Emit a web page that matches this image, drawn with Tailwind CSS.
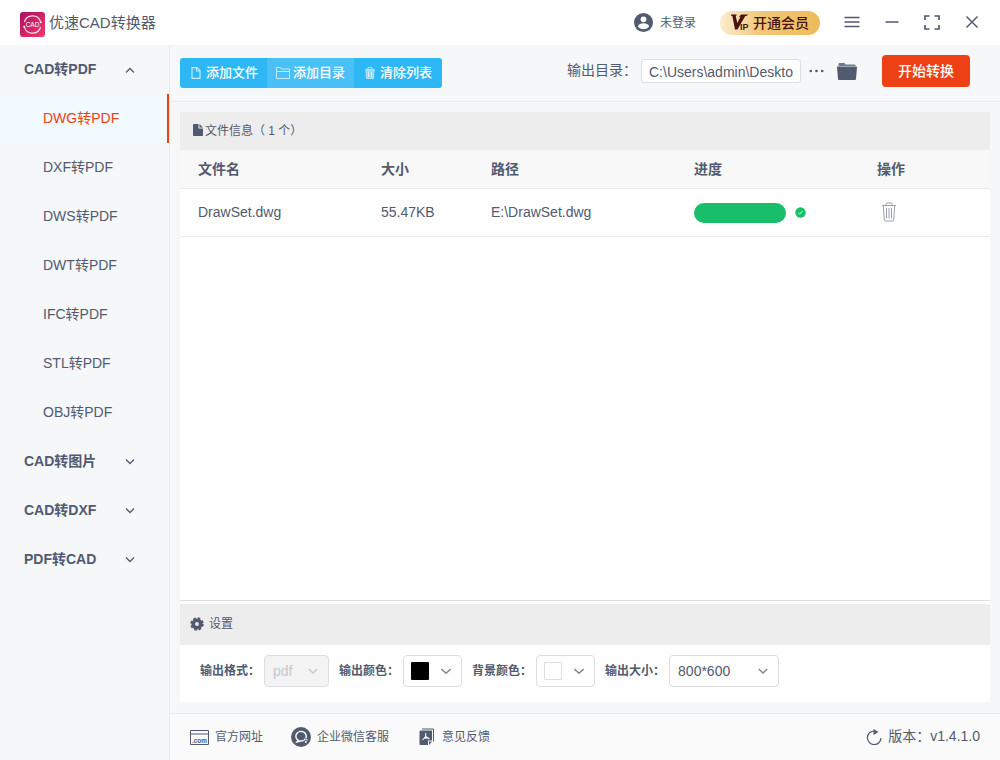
<!DOCTYPE html>
<html lang="zh-CN">
<head>
<meta charset="utf-8">
<meta name="viewport" content="width=device-width, initial-scale=1">
<title>优速CAD转换器</title>
<script src="https://cdn.jsdelivr.net/npm/@tailwindcss/browser@4"></script>
</head>
<body class="flex h-screen flex-col overflow-hidden bg-[#f5f7f9] font-['Liberation_Sans','Noto_Sans_CJK_SC',sans-serif] text-sm text-[#515a6e]">

<header class="flex h-[45px] shrink-0 items-center bg-white px-5">
  <svg class="mt-1 size-[25px]" viewBox="0 0 25 25" aria-hidden="true">
    <defs><linearGradient id="logo" x1="0" y1="0" x2="1" y2="1"><stop offset="0" stop-color="#a90f63"/><stop offset="1" stop-color="#f23a6c"/></linearGradient></defs>
    <rect width="25" height="25" rx="3" fill="url(#logo)"/>
    <path d="M4.400 10A8.400 8.400 0 0 1 20.500 9.600M20.600 15A8.400 8.400 0 0 1 4.500 15.400" fill="none" stroke="#fbdbe6" stroke-width="1.200"/>
    <circle cx="20.800" cy="10.300" r="1" fill="#fff"/><circle cx="4.200" cy="14.700" r="1" fill="#fff"/>
    <text x="12.500" y="15" text-anchor="middle" font-family="Liberation Sans" font-size="6.500" fill="#fff">CAD</text>
  </svg>
  <h1 class="ml-1 flex-1 text-[15px] leading-5">优速CAD转换器</h1>
  <button type="button" class="flex items-center gap-[7px] text-xs">
    <svg class="size-[19px]" viewBox="0 0 19 19" aria-hidden="true"><circle cx="9.500" cy="9.500" r="9.500" fill="#515a6e"/><circle cx="9.500" cy="6.300" r="2.900" fill="#fff"/><path d="M3.800 13.300c.6-2.300 3.200-3.100 5.700-3.100s5.100.8 5.700 3.100c-1.200 1.900-3.300 2.900-5.700 2.900s-4.500-1-5.700-2.900z" fill="#fff"/></svg>
    <span>未登录</span>
  </button>
  <button type="button" class="ml-6 flex h-6 w-[100px] items-center rounded-full bg-linear-to-r from-[#fbecd0] via-[#f1c878] via-40% to-[#eebb58] pl-[11px] text-[#4a1114]">
    <svg class="mr-[3px] h-[17px] w-[19px]" viewBox="0 0 19 17" fill="#4a1114" role="img" aria-label="VIP"><path d="M0 .5h5.500v1.200h-.8L6.300 9 9.500 2.800H7.600L10.300.5H17l-1.500 1.400h-1.200L6.400 15.500H4L1.300 1.800H0z"/><text x="9" y="16" font-family="Liberation Sans" font-weight="bold" font-size="9">IP</text></svg>
    <span class="text-sm leading-5 font-medium">开通会员</span>
  </button>
  <button type="button" aria-label="菜单" class="ml-6"><svg class="size-4" viewBox="0 0 16 16" fill="none" stroke="#515a6e" stroke-width="1.500"><path d="M.5 2.500h15M.5 7h15M.5 11.500h15"/></svg></button>
  <button type="button" aria-label="最小化" class="ml-6"><svg class="size-4" viewBox="0 0 16 16" fill="none" stroke="#515a6e" stroke-width="1.500"><path d="M1.500 7h13"/></svg></button>
  <button type="button" aria-label="最大化" class="ml-6"><svg class="size-4" viewBox="0 0 16 16" fill="none" stroke="#515a6e" stroke-width="1.700"><path d="M5.500 1H1v4M10.500 1H15v4M1 10v4h4.500M15 10v4h-4.500"/></svg></button>
  <button type="button" aria-label="关闭" class="ml-6"><svg class="size-4" viewBox="0 0 16 16" fill="none" stroke="#515a6e" stroke-width="1.500"><path d="M2.500 1.500l11 11M13.500 1.500l-11 11"/></svg></button>
</header>

<div class="flex min-h-0 flex-1">
  <nav class="w-[170px] shrink-0 border-r border-[#e8eaec] leading-5">
    <button type="button" aria-expanded="true" class="flex h-[49px] w-full items-center justify-between pb-[2px] pl-6 pr-[34px] font-bold">CAD转PDF
      <svg class="mt-[2px] size-[10px]" viewBox="0 0 10 10" fill="none" stroke="#515a6e" stroke-width="1.300"><path d="M1 7.500l4-4 4 4"/></svg></button>
    <a href="#dwg" aria-current="page" class="flex h-[49px] items-center border-r-2 border-[#ed4014] bg-[#f0faff] pb-[2px] pl-[43px] text-[#ed4014]">DWG转PDF</a>
    <a href="#dxf" class="flex h-[49px] items-center pb-[2px] pl-[43px]">DXF转PDF</a>
    <a href="#dws" class="flex h-[49px] items-center pb-[2px] pl-[43px]">DWS转PDF</a>
    <a href="#dwt" class="flex h-[49px] items-center pb-[2px] pl-[43px]">DWT转PDF</a>
    <a href="#ifc" class="flex h-[49px] items-center pb-[2px] pl-[43px]">IFC转PDF</a>
    <a href="#stl" class="flex h-[49px] items-center pb-[2px] pl-[43px]">STL转PDF</a>
    <a href="#obj" class="flex h-[49px] items-center pb-[2px] pl-[43px]">OBJ转PDF</a>
    <button type="button" aria-expanded="false" class="flex h-[49px] w-full items-center justify-between pb-[2px] pl-6 pr-[34px] font-bold">CAD转图片
      <svg class="size-[10px]" viewBox="0 0 10 10" fill="none" stroke="#515a6e" stroke-width="1.300"><path d="M1 3.500l4 4 4-4"/></svg></button>
    <button type="button" aria-expanded="false" class="flex h-[49px] w-full items-center justify-between pb-[2px] pl-6 pr-[34px] font-bold">CAD转DXF
      <svg class="size-[10px]" viewBox="0 0 10 10" fill="none" stroke="#515a6e" stroke-width="1.300"><path d="M1 3.500l4 4 4-4"/></svg></button>
    <button type="button" aria-expanded="false" class="flex h-[49px] w-full items-center justify-between pb-[2px] pl-6 pr-[34px] font-bold">PDF转CAD
      <svg class="size-[10px]" viewBox="0 0 10 10" fill="none" stroke="#515a6e" stroke-width="1.300"><path d="M1 3.500l4 4 4-4"/></svg></button>
  </nav>

  <div class="flex min-w-0 flex-1 flex-col">
    <div class="flex h-[57px] shrink-0 items-start border-b border-[#e8eaec] pt-[10px] pl-[10px] pr-[30px]">
      <div class="mt-[3px] flex h-[30px] overflow-hidden rounded-[3px] bg-[#2db7f5] text-[13px] leading-5 font-medium text-white">
        <button type="button" class="flex w-[87px] items-center gap-[5px] pl-[11px]">
          <svg class="h-3 w-[10px]" viewBox="0 0 10 12" fill="none" stroke="#c5eafc" stroke-width="1.200"><path d="M1 .6h5l3 3v7.800H1zM5.500.5v3.500H9"/></svg>添加文件</button>
        <button type="button" class="flex w-[87px] items-center gap-[3px] bg-[#4ac0f7] pl-[9px]">
          <svg class="h-3 w-[14px]" viewBox="0 0 14 12" fill="none" stroke="#c5eafc"><path d="M.5 11.500v-11h4l1 1.500h8v9.500H.5zM.5 4.500h13"/></svg>添加目录</button>
        <button type="button" class="flex w-[88px] items-center gap-[5px] pl-[11px]">
          <svg class="h-3 w-[10px]" viewBox="0 0 10 12" fill="none" stroke="#b4e4fb"><path d="M0 2.500h10M3 2.500V.5h4v2"/><path d="M1 3h8l-.6 8.500H1.600z" fill="#8fd7f9"/><path d="M3.500 4.500v5.500M6.500 4.500v5.500" stroke="#d8f2fd"/></svg>清除列表</button>
      </div>
      <div class="ml-auto flex h-8 items-center">
        <label for="outdir" class="pb-[2px] leading-5">输出目录：</label>
        <input id="outdir" type="text" value="C:\Users\admin\Deskto" class="ml-1 h-6 w-40 rounded-[3px] border border-[#dcdee2] bg-white px-[7px] pt-[2px] text-sm leading-5 outline-none">
        <button type="button" aria-label="浏览" class="ml-2"><svg class="h-4 w-[15px]" viewBox="0 0 15 16" fill="#515a6e"><circle cx="1.800" cy="8" r="1.300"/><circle cx="7.500" cy="8" r="1.300"/><circle cx="13.200" cy="8" r="1.300"/></svg></button>
        <button type="button" aria-label="打开目录" class="ml-[13px]"><svg class="h-[17px] w-5" viewBox="0 0 20 17" fill="#515a6e"><path d="M1.500 3V1q0-1 1-1h5l1 1.500h9q1 0 1 1V3z" opacity=".8"/><path d="M.8 3.500h18.400q.8 0 .8.800l-1 11.700q-.1 1-1 1H2q-.9 0-1-1L0 4.300q0-.8.800-.8z"/></svg></button>
        <button type="button" class="ml-[25px] h-8 w-[88px] rounded bg-[#ed4014] text-sm font-medium text-white">开始转换</button>
      </div>
    </div>

    <main class="flex min-h-0 flex-1 flex-col px-[10px] pt-[10px] pb-[11px]">
      <section class="flex min-h-0 flex-1 flex-col border-b border-[#dcdee2] bg-white">
        <h2 class="flex h-[38px] shrink-0 items-center bg-[#ededed] pl-[13px] text-xs">
          <svg class="mr-[2px] mb-[2px] h-3 w-[10px]" viewBox="0 0 10 12" fill="#515a6e"><path d="M.8 0H5.500v4.500H10v6.700q0 .8-.8.800H.8q-.8 0-.8-.8V.8Q0 0 .8 0zM6.500 0L10 3.500H6.500z"/></svg>文件信息（ 1 个）</h2>
        <table class="w-full table-fixed border-separate border-spacing-0 text-left leading-5">
          <thead class="bg-[#f8f8f9]">
            <tr class="h-[39px]">
              <th class="w-[183px] border-b border-[#e8eaec] pl-[18px] font-bold">文件名</th>
              <th class="w-[110px] border-b border-[#e8eaec] pl-[18px] font-bold">大小</th>
              <th class="w-[203px] border-b border-[#e8eaec] pl-[18px] font-bold">路径</th>
              <th class="w-[183px] border-b border-[#e8eaec] pl-[18px] font-bold">进度</th>
              <th class="border-b border-[#e8eaec] pl-[18px] font-bold">操作</th>
            </tr>
          </thead>
          <tbody>
            <tr class="h-12">
              <td class="border-b border-[#e8eaec] pb-px pl-[18px]">DrawSet.dwg</td>
              <td class="border-b border-[#e8eaec] pb-px pl-[18px]">55.47KB</td>
              <td class="border-b border-[#e8eaec] pb-px pl-[18px]">E:\DrawSet.dwg</td>
              <td class="border-b border-[#e8eaec] pl-[18px]"><div class="flex items-center gap-[9px]"><div role="progressbar" aria-label="进度" aria-valuenow="100" class="h-5 w-[92px] rounded-full bg-[#19be6b]"></div><svg class="size-[11px]" viewBox="0 0 11 11"><circle cx="5.500" cy="5.500" r="5.200" fill="#19be6b"/><path d="M3.200 5.800l1.500 1.400 3-3.300" fill="none" stroke="#c9f2dd"/></svg></div></td>
              <td class="border-b border-[#e8eaec] pl-[23px]"><button type="button" aria-label="删除" class="mb-[2px] block"><svg class="h-5 w-[14px]" viewBox="0 0 14 20" fill="none" stroke="#9ba0ac"><path d="M0 3.500h14M4 3.500V2q0-1 1-1h4q1 0 1 1v1.500M1.300 4l1 14q.1 1 1 1h7.400q.9 0 1-1l1-14M4.500 6v10.500M7 6v10.500M9.500 6v10.500"/></svg></button></td>
            </tr>
          </tbody>
        </table>
      </section>

      <section class="shrink-0 bg-white pt-[3px]">
        <h2 class="flex h-[41px] items-center gap-[5px] bg-[#ededed] pb-[2px] pl-[10px] text-xs">
          <svg class="size-[14px]" viewBox="0 0 14 14"><circle cx="7" cy="7" r="3.700" fill="none" stroke="#515a6e" stroke-width="3.600"/><circle cx="7" cy="7" r="5.700" fill="none" stroke="#515a6e" stroke-width="2" stroke-dasharray="2.600 1.877"/></svg>设置</h2>
        <form class="flex h-[57px] items-center pb-[5px] pl-5 text-xs font-bold">
          <label for="format" class="mr-1">输出格式：</label>
          <div class="relative mr-[10px]">
            <select id="format" disabled class="block h-8 w-[65px] appearance-none rounded border border-[#dcdee2] bg-[#f3f3f3] pl-2 text-sm font-normal text-[#c5c8ce] opacity-100"><option>pdf</option></select>
            <svg class="pointer-events-none absolute top-[11px] right-[11px] size-[10px]" viewBox="0 0 10 10" fill="none" stroke="#c5c8ce" stroke-width="1.500"><path d="M.8 3l4.200 4 4.200-4"/></svg>
          </div>
          <span id="outcolor" class="mr-1">输出颜色：</span>
          <button type="button" aria-labelledby="outcolor" class="mr-[10px] flex h-8 w-[59px] items-center justify-between rounded border border-[#dcdee2] pl-[7px] pr-[10px]"><span class="size-[18px] rounded-[1px] bg-black"></span><svg class="size-[10px]" viewBox="0 0 10 10" fill="none" stroke="#808695" stroke-width="1.500"><path d="M.3 3L5 7.300 9.700 3"/></svg></button>
          <span id="bgcolor" class="mr-1">背景颜色：</span>
          <button type="button" aria-labelledby="bgcolor" class="mr-[10px] flex h-8 w-[59px] items-center justify-between rounded border border-[#dcdee2] pl-[7px] pr-[10px]"><span class="size-[18px] rounded-[1px] border border-[#dcdee2] bg-white"></span><svg class="size-[10px]" viewBox="0 0 10 10" fill="none" stroke="#808695" stroke-width="1.500"><path d="M.3 3L5 7.300 9.700 3"/></svg></button>
          <label for="size" class="mr-1">输出大小：</label>
          <div class="relative">
            <select id="size" class="block h-8 w-[110px] appearance-none rounded border border-[#dcdee2] bg-white pl-2 text-sm font-normal"><option>800*600</option></select>
            <svg class="pointer-events-none absolute top-[11px] right-[11px] size-[10px]" viewBox="0 0 10 10" fill="none" stroke="#808695" stroke-width="1.500"><path d="M.8 3l4.200 4 4.200-4"/></svg>
          </div>
        </form>
      </section>
    </main>

    <footer class="flex h-[47px] shrink-0 items-center border-t border-[#e8eaec] bg-[#fafafa] px-5 text-xs">
      <a href="#site" class="flex items-center gap-[6px]"><svg class="h-[15px] w-[19px]" viewBox="0 0 19 15"><path d="M.5.500h18v14H.5zM.5 4h18" fill="none" stroke="#515a6e"/><text x="9.500" y="12.500" text-anchor="middle" font-family="Liberation Sans" font-weight="bold" font-size="6.500" fill="#515a6e">.com</text></svg>官方网址</a>
      <a href="#wecom" class="ml-7 flex items-center gap-[6px]"><svg class="size-5" viewBox="0 0 20 20"><circle cx="10" cy="10" r="10" fill="#515a6e"/><path d="M14.800 11.200A5.200 4.800 0 1 0 7.300 13.300L6 15l3.300-1q1.800.3 3.400-.6" fill="none" stroke="#fff" stroke-width="1.400"/><circle cx="13.700" cy="12.500" r="1" fill="#fff"/><circle cx="15.900" cy="12.800" r=".8" fill="#fff"/><circle cx="14.800" cy="14.900" r="1" fill="#fff"/></svg>企业微信客服</a>
      <a href="#feedback" class="ml-[30px] flex items-center gap-2"><svg class="h-[18px] w-[15px]" viewBox="0 0 15 18"><path d="M3 1h11.500v12.500" fill="none" stroke="#515a6e"/><path d="M1.500 2.500H13v10h-4V17h-7.500q-1 0-1-1V3.500q0-1 1-1z" fill="#515a6e"/><path d="M10 13.500h3L10 17z" fill="#515a6e"/><path d="M6.700 5v3.500L3.500 12M6.700 8.500l3.800 2.500M5 10.200l3.500-.3" fill="none" stroke="#fff" stroke-width="1.100"/></svg>意见反馈</a>
      <button type="button" class="ml-auto flex items-center gap-[6px] text-sm leading-5"><svg class="size-4" viewBox="0 0 16 16"><path d="M8.500 2A6.800 6.800 0 1 0 15 9" fill="none" stroke="#515a6e" stroke-width="1.200"/><path d="M7.500 0L12.500 3 7.500 6z" fill="#515a6e"/></svg><span class="pb-[2px]">版本：v1.4.1.0</span></button>
    </footer>
  </div>
</div>
</body>
</html>
